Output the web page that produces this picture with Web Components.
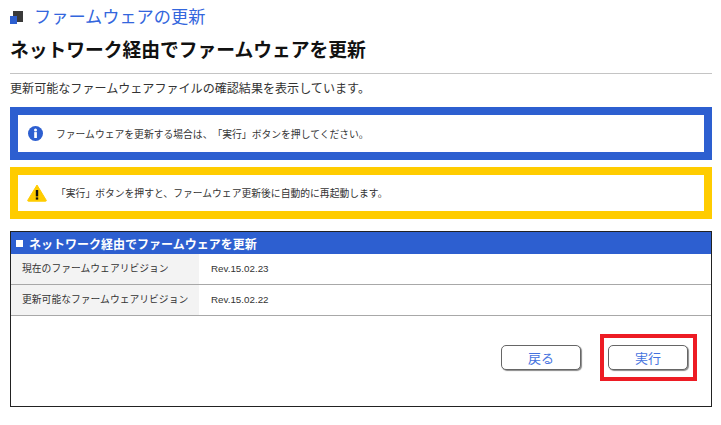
<!DOCTYPE html>
<html lang="ja">
<head>
<meta charset="utf-8">
<title>ファームウェアの更新</title>
<style>
html,body{margin:0;padding:0;background:#fff;}
body{font-family:"Liberation Sans","Noto Sans CJK JP",sans-serif;color:#222;width:721px;height:425px;overflow:hidden;text-spacing-trim:space-all;}
</style>
</head>
<body>
<fw-page>
  <page-heading>ファームウェアの更新</page-heading>
  <page-title>ネットワーク経由でファームウェアを更新</page-title>
  <page-lead>更新可能なファームウェアファイルの確認結果を表示しています。</page-lead>
  <notice-box kind="info">ファームウェアを更新する場合は、「実行」ボタンを押してください。</notice-box>
  <notice-box kind="warn">「実行」ボタンを押すと、ファームウェア更新後に自動的に再起動します。</notice-box>
  <fw-panel heading="ネットワーク経由でファームウェアを更新">
    <info-row label="現在のファームウェアリビジョン">Rev.15.02.23</info-row>
    <info-row label="更新可能なファームウェアリビジョン">Rev.15.02.22</info-row>
    <fw-button slot="actions">戻る</fw-button>
    <fw-button slot="actions" marked>実行</fw-button>
  </fw-panel>
</fw-page>

<script>
function define(name, html, attrs) {
  const tpl = document.createElement('template');
  tpl.innerHTML = html;
  customElements.define(name, class extends HTMLElement {
    constructor() {
      super();
      this.attachShadow({mode: 'open'}).append(tpl.content.cloneNode(true));
    }
    connectedCallback() {
      if (attrs) attrs(this, this.shadowRoot);
    }
  });
}

define('fw-page', `
<style>
  :host{display:flex;flex-direction:column;box-sizing:border-box;width:721px;padding:0 9px 0 10px;}
</style>
<slot></slot>`);

define('page-heading', `
<style>
  :host{display:flex;align-items:center;gap:11px;height:32px;font-size:17.2px;line-height:32px;color:#3366dd;}
  svg{display:block;flex:none;margin-top:3px;}
  span{position:relative;top:1px;}
</style>
<svg width="13" height="13" viewBox="0 0 13 13">
  <rect x="3" y="0" width="10" height="11" fill="#3a3a3a"/>
  <rect x="0" y="5" width="7" height="8" fill="#2d5fd0"/>
</svg>
<span><slot></slot></span>`);

define('page-title', `
<style>
  :host{display:block;height:42px;box-sizing:border-box;border-bottom:1px solid #c4c4c4;font-size:18.75px;font-weight:bold;line-height:38px;color:#111;}
</style>
<slot></slot>`);

define('page-lead', `
<style>
  :host{display:block;height:33px;font-size:12.07px;line-height:31px;color:#333;}
</style>
<slot></slot>`);

define('notice-box', `
<style>
  :host{display:flex;align-items:center;box-sizing:border-box;height:53px;margin-bottom:7px;
    border:8px solid #2d5fd0;padding-left:10px;background:#fff;font-size:9.8px;color:#333;}
  :host([kind=warn]){border-color:#ffcc00;height:52px;margin-bottom:12px;padding-left:9px;}
  .ic{flex:none;display:flex;width:28px;}
  :host([kind=warn]) .ic{width:29px;}
  svg{display:block;}
  :host([kind=info]) .warn, :host([kind=warn]) .info{display:none;}
</style>
<span class="ic">
  <svg class="info" width="15" height="15" viewBox="0 0 15 15">
    <circle cx="7.5" cy="7.5" r="7.5" fill="#2d5fd0"/>
    <circle cx="7.5" cy="3.9" r="1.5" fill="#fff"/>
    <rect x="6.2" y="6.1" width="2.7" height="5.9" fill="#fff"/>
  </svg>
  <svg class="warn" width="20" height="18" viewBox="0 0 20 18">
    <path d="M10 1 L19.2 16.2 Q19.6 17.2 18.6 17.2 L1.4 17.2 Q.4 17.2 .8 16.2 Z" fill="#ffcc00" stroke="#ffcc00" stroke-linejoin="round"/>
    <rect x="8.8" y="6" width="2.4" height="6.4" fill="#111"/>
    <rect x="8.8" y="13.4" width="2.4" height="2.2" fill="#111"/>
  </svg>
</span>
<span><slot></slot></span>`);

define('fw-panel', `
<style>
  :host{display:flex;flex-direction:column;box-sizing:border-box;width:702px;height:176px;border:1px solid #222;background:#fff;}
  header{display:flex;align-items:center;gap:6px;height:22px;padding-left:5px;flex:none;background:#2d5fd0;color:#fff;font-size:12px;font-weight:bold;}
  header i{display:block;width:7px;height:7px;background:#fff;}
  .actions{display:flex;justify-content:flex-end;gap:27px;padding:29px 23px 0 0;}
</style>
<header><i></i><span id="h"></span></header>
<div class="rows"><slot></slot></div>
<div class="actions"><slot name="actions"></slot></div>`,
(el, root) => { root.getElementById('h').textContent = el.getAttribute('heading'); });

define('info-row', `
<style>
  :host{display:flex;height:31px;box-sizing:border-box;border-bottom:1px solid #a8a8a8;font-size:9.8px;color:#333;}
  :host(:last-child){border-bottom:2px solid #dedede;}
  .l{flex:none;box-sizing:border-box;width:188px;padding-left:11px;background:#f3f3f3;line-height:29px;}
  .v{padding-left:12px;line-height:29px;}
</style>
<div class="l" id="l"></div>
<div class="v"><slot></slot></div>`,
(el, root) => { root.getElementById('l').textContent = el.getAttribute('label'); });

define('fw-button', `
<style>
  :host{display:block;position:relative;}
  button{display:block;box-sizing:border-box;width:80px;height:25px;padding:0;background:#fff;border:1px solid #666;border-radius:5px;
    box-shadow:1px 1px 1px #8a8a8a;font:13px "Liberation Sans","Noto Sans CJK JP",sans-serif;color:#4472de;}
  .mark{display:none;position:absolute;left:-8px;top:-11px;width:97px;height:47px;box-sizing:border-box;border:4px solid #ed1c24;pointer-events:none;}
  :host([marked]) .mark{display:block;}
</style>
<button><slot></slot></button>
<div class="mark"></div>`);
</script>
</body>
</html>
